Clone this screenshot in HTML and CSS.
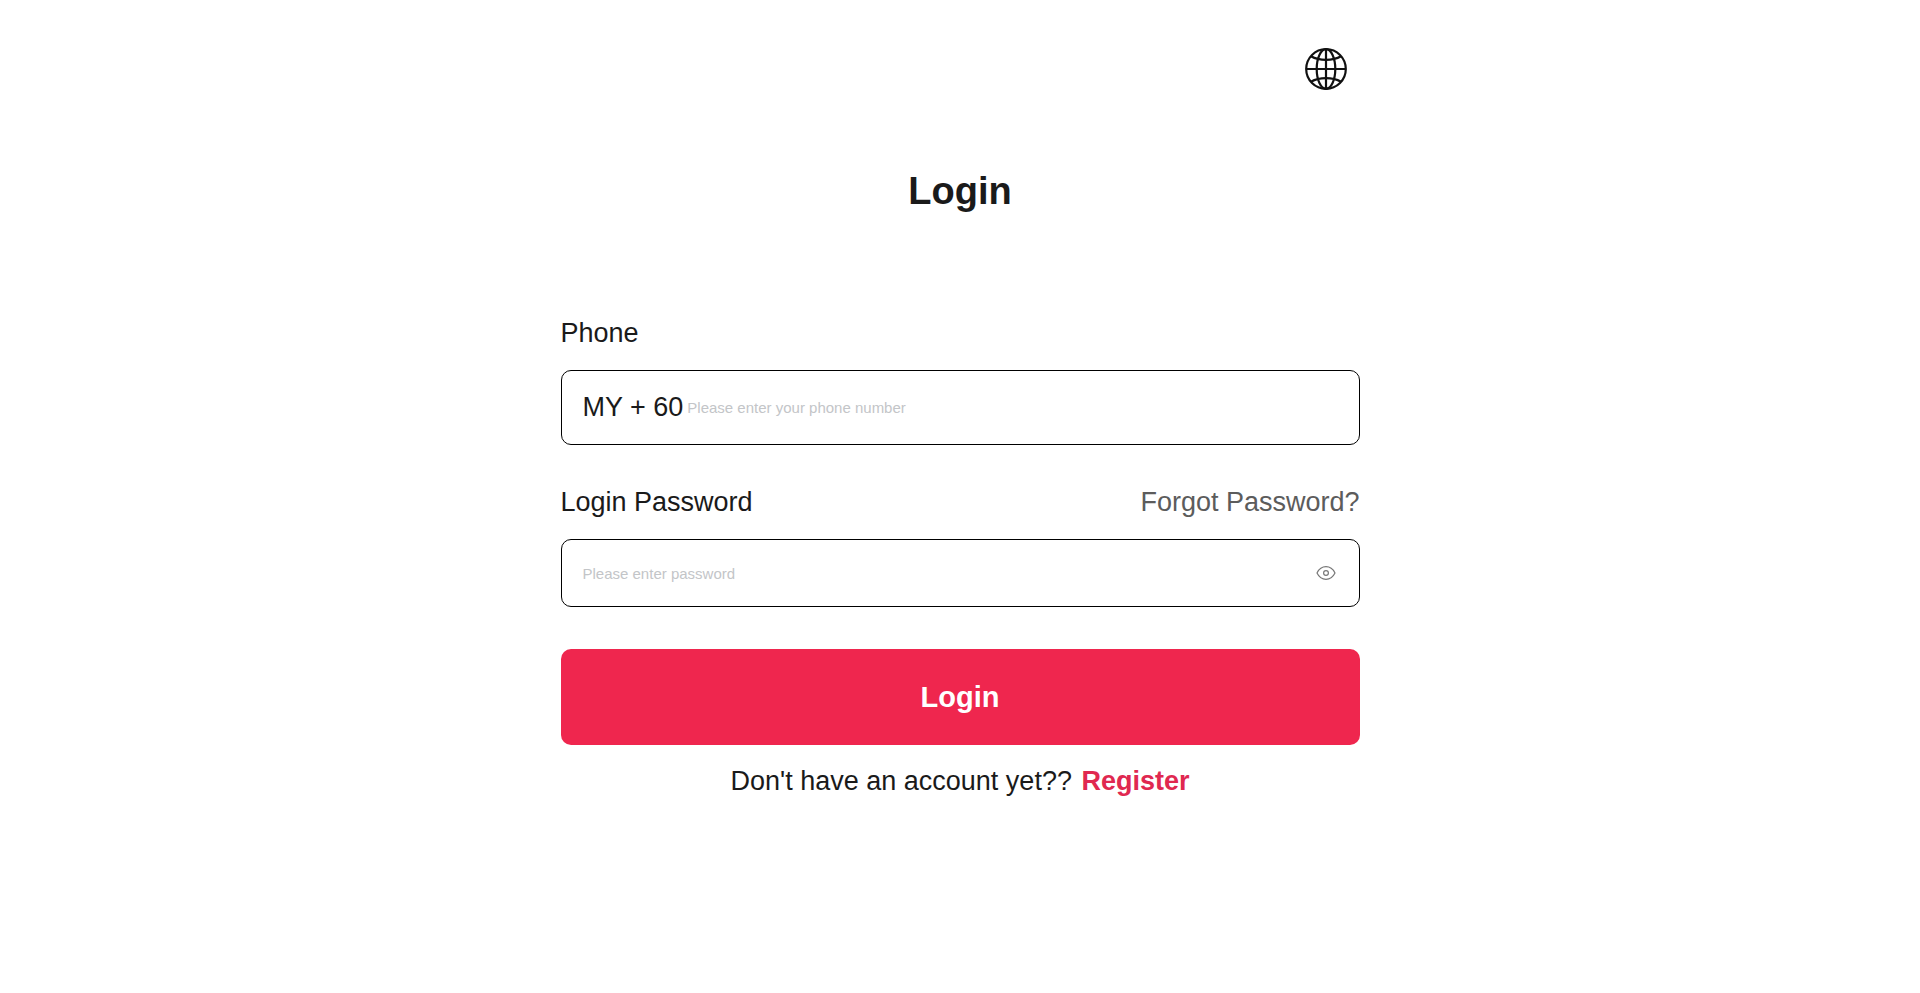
FILE: index.html
```html
<!DOCTYPE html>
<html lang="en">
<head>
    <meta charset="UTF-8">
    <meta name="viewport" content="width=device-width, initial-scale=1.0">
    <title>Login</title>
    <link rel="stylesheet" href="styles.css">
</head>
<body>

    <div class="login-container">
        <!-- Language switch -->
        <header class="top-bar">
            <button type="button" class="icon-btn" aria-label="Change language">
                <svg class="globe-icon" viewBox="0 0 42 42" fill="none" stroke="currentColor" stroke-width="2.2">
                    <circle cx="21" cy="21" r="19.8"/>
                    <ellipse cx="21" cy="21" rx="9.3" ry="19.8"/>
                    <path d="M21 1v40M1 21h40"/>
                    <path d="M6 8.2c4 2.3 9 3.6 15 3.6s11-1.3 15-3.6"/>
                    <path d="M6 33.8c4-2.3 9-3.6 15-3.6s11 1.3 15 3.6"/>
                </svg>
            </button>
        </header>

        <h1>Login</h1>

        <!-- Login Form -->
        <form id="loginForm">
            <div class="input-group">
                <div class="label-row">
                    <label for="phone">Phone</label>
                </div>
                <div class="input-box phone-box">
                    <span class="area-code">MY + 60</span>
                    <input type="tel" id="phone" name="phone" placeholder="Please enter your phone number">
                </div>
            </div>

            <div class="input-group">
                <div class="label-row">
                    <label for="password">Login Password</label>
                    <a href="#" class="forgot-link">Forgot Password?</a>
                </div>
                <div class="input-box">
                    <input type="password" id="password" name="password" placeholder="Please enter password">
                    <button type="button" class="icon-btn" aria-label="Show password">
                        <svg class="eye-icon" viewBox="0 0 24 24" fill="none" stroke="currentColor" stroke-width="1.2">
                            <path d="M3 12C5 8 8.300 5.700 12 5.700S19 8 21 12C19 16 15.700 18.300 12 18.300S5 16 3 12Z" stroke-linejoin="round"/>
                            <circle cx="12" cy="12" r="2.400"/>
                        </svg>
                    </button>
                </div>
            </div>

            <button type="submit" class="login-btn">Login</button>
        </form>

        <p class="register-text">Don't have an account yet?? <a href="#">Register</a></p>
    </div>

</body>
</html>
```
FILE: styles.css
```css
* {
    margin: 0;
    padding: 0;
    box-sizing: border-box;
    font-family: Arial, "Liberation Sans", sans-serif;
}

body {
    background-color: #fff;
    font-size: 27px;
    line-height: 31px;
    color: #1a1a1a;
}

a {
    text-decoration: none;
}

.login-container {
    width: 100%;
    max-width: 799px;
    margin: 0 auto;
    padding: 48px 0;
}

.top-bar {
    display: flex;
    justify-content: flex-end;
    padding: 0 13px;
}

.icon-btn {
    display: flex;
    border: none;
    background: none;
    cursor: pointer;
}

.globe-icon {
    width: 42px;
    height: 42px;
    color: #111;
}

h1 {
    margin: 80px 0 105px;
    font-size: 38px;
    line-height: 43px;
    text-align: center;
}

.input-group {
    margin-bottom: 42px;
}

.label-row {
    display: flex;
    justify-content: space-between;
    margin-bottom: 21px;
}

.forgot-link {
    color: #5c5c5c;
}

.input-box {
    display: flex;
    align-items: center;
    min-height: 68px;
    padding: 0 21px;
    border: 1px solid #000;
    border-radius: 10px;
}

.phone-box {
    min-height: 75px;
    gap: 4px;
}

.input-box input {
    flex: 1;
    min-width: 0;
    border: none;
    outline: none;
    background: none;
    font-size: 15px;
    color: #1a1a1a;
}

.input-box input::placeholder {
    color: #c3c5c8;
}

.eye-icon {
    width: 24px;
    height: 24px;
    color: #777;
}

.login-btn {
    display: block;
    width: 100%;
    height: 96px;
    border: none;
    border-radius: 10px;
    background-color: #ef264e;
    color: #fff;
    font-size: 29px;
    font-weight: bold;
    cursor: pointer;
}

.register-text {
    margin-top: 21px;
    text-align: center;
}

.register-text a {
    margin-left: 2px;
    color: #e02850;
    font-weight: bold;
}
```
